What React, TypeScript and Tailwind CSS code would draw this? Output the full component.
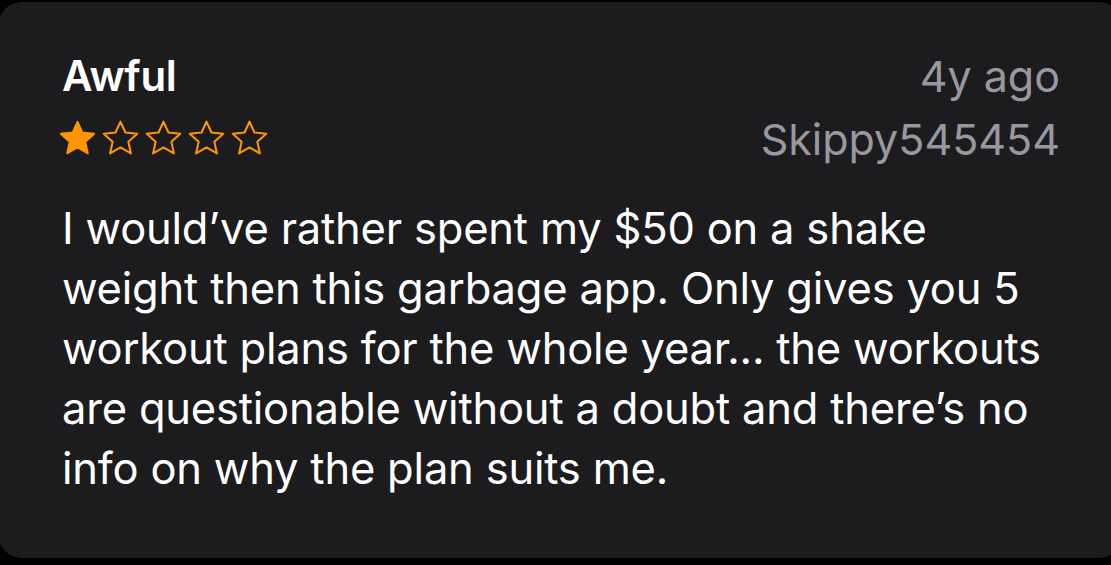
import React from "react";

const STAR =
  "M12 2.6l2.75 6.05 6.6.7-4.95 4.45 1.4 6.5L12 17l-5.8 3.3 1.4-6.5L2.65 9.35l6.6-.7z";

function Star({ filled }: { filled: boolean }) {
  return (
    <svg viewBox="0 0 24 24" className="w-[43px] h-[43px]">
      <path
        d={STAR}
        fill={filled ? "#ff9500" : "none"}
        stroke="#ff9500"
        strokeWidth={filled ? 1 : 1.15}
        strokeLinejoin="round"
      />
    </svg>
  );
}

export default function App() {
  const lines = [
    "I would\u2019ve rather spent my $50 on a shake",
    "weight then this garbage app. Only gives you 5",
    "workout plans for the whole year... the workouts",
    "are questionable without a doubt and there\u2019s no",
    "info on why the plan suits me.",
  ];

  return (
    <div className="w-[1111px] h-[565px] bg-black overflow-hidden">
      <div
        className="h-[556px] ml-[-2px] mr-[-12px] mt-[2px] rounded-[24px] bg-[#1c1c1e] pl-[64px] pr-[63px] pt-[48px]"
        style={{ fontFamily: "Inter, 'Noto Sans', sans-serif" }}
      >
        {/* Header */}
        <div className="flex justify-between">
          <div>
            <h1 className="text-[42px] leading-[52px] font-semibold text-white tracking-[-0.3px]">
              Awful
            </h1>
            <div className="flex items-center mt-[15px] -ml-[6px]">
              <Star filled />
              <Star filled={false} />
              <Star filled={false} />
              <Star filled={false} />
              <Star filled={false} />
            </div>
          </div>
          <div className="text-right text-[#98989e] text-[43px] leading-[63px] mt-[-5px]">
            <div>4y ago</div>
            <div>Skippy545454</div>
          </div>
        </div>

        {/* Body */}
        <p className="mt-[27px] text-white text-[43.5px] leading-[60px] tracking-[-0.2px]">
          {lines.map((l, i) => (
            <span key={i}>
              {l}
              {i < lines.length - 1 && <br />}
            </span>
          ))}
        </p>
      </div>
    </div>
  );
}
